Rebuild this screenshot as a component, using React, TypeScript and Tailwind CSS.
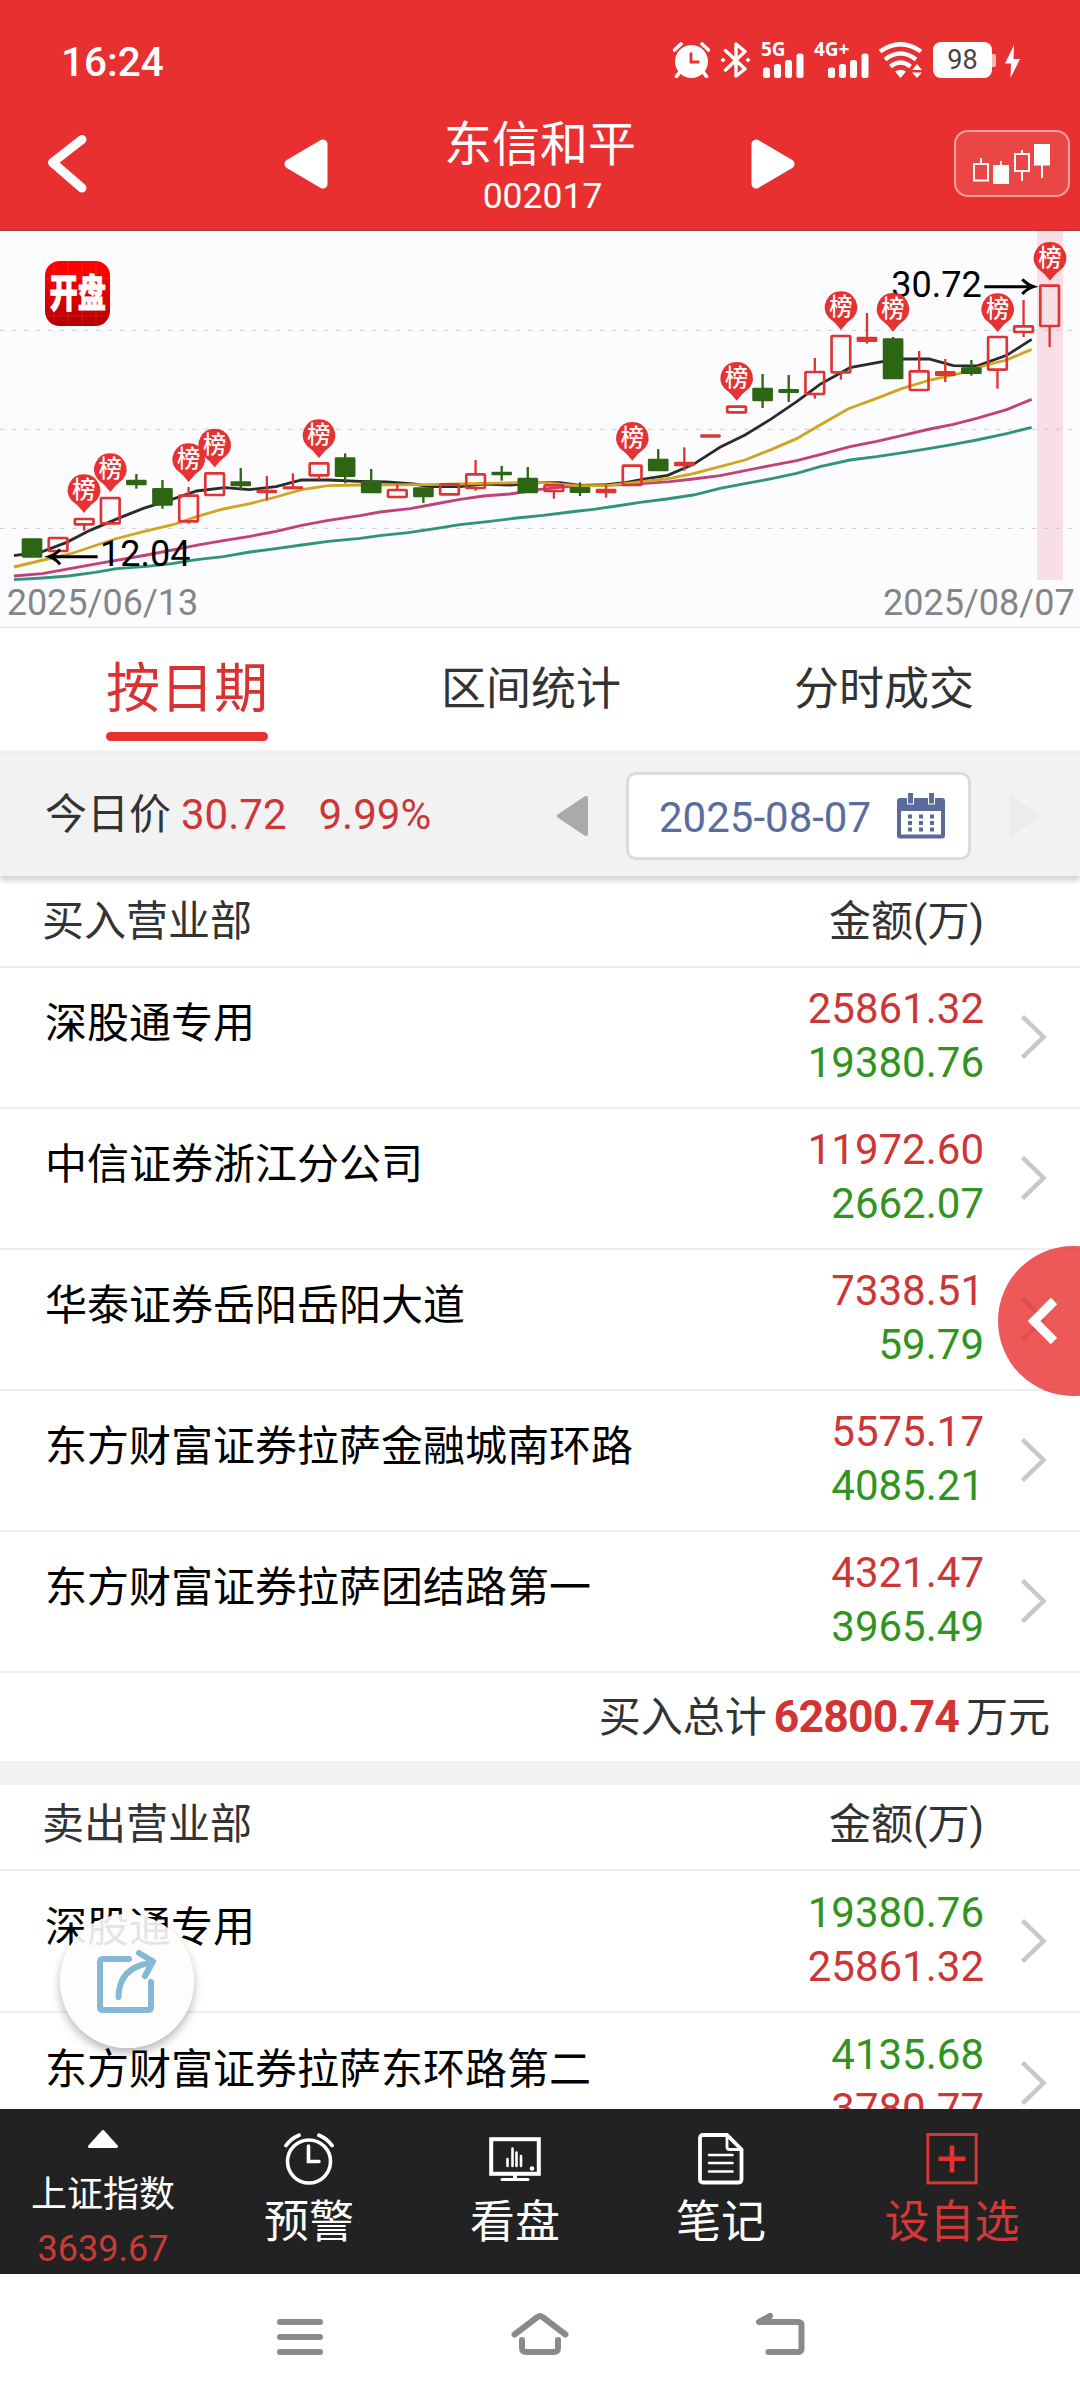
import React from 'react';
import { clsx } from 'clsx';

type Candle = {
  up: boolean;
  top: number;
  bottom: number;
  high?: number;
  low?: number;
  solid?: boolean;
};

type Broker = {
  name: string;
  first: string;
  second: string;
};

// Chart units are thirds of a pixel
const FIRST_X = 96;
const STEP = 78.28;

const candles: Candle[] = [
  { up: false, top: 925, bottom: 983 },
  { up: true, top: 920, bottom: 967 },
  { up: true, top: 863, bottom: 887, low: 902 },
  { up: true, top: 800, bottom: 884 },
  { up: false, top: 749, bottom: 766, high: 732, low: 776 },
  { up: false, top: 774, bottom: 827, high: 750, low: 836 },
  { up: true, top: 793, bottom: 878, high: 771, low: 881 },
  { up: true, top: 726, bottom: 799 },
  { up: false, top: 754, bottom: 769, high: 714, low: 781 },
  { up: true, top: 779, bottom: 790, high: 738, low: 811, solid: true },
  { up: true, top: 769, bottom: 778, high: 730, solid: true },
  { up: true, top: 696, bottom: 740, low: 749 },
  { up: false, top: 682, bottom: 741, high: 670, low: 760 },
  { up: false, top: 752, bottom: 790, high: 717 },
  { up: true, top: 776, bottom: 805, high: 763 },
  { up: false, top: 772, bottom: 802, low: 819 },
  { up: true, top: 759, bottom: 797 },
  { up: true, top: 729, bottom: 778, high: 690, low: 782 },
  { up: false, top: 725, bottom: 736, high: 708, low: 752 },
  { up: false, top: 743, bottom: 790, high: 711 },
  { up: true, top: 762, bottom: 787, low: 806 },
  { up: false, top: 771, bottom: 789, high: 757, low: 798 },
  { up: true, top: 776, bottom: 790, high: 765, low: 803, solid: true },
  { up: true, top: 703, bottom: 769 },
  { up: false, top: 686, bottom: 724, high: 657 },
  { up: true, top: 695, bottom: 709, high: 652, low: 722, solid: true },
  { up: true, top: 613, bottom: 623, solid: true },
  { up: true, top: 526, bottom: 551 },
  { up: false, top: 473, bottom: 514, high: 432, low: 534 },
  { up: false, top: 477, bottom: 489, high: 435, low: 516 },
  { up: true, top: 422, bottom: 496, high: 384, low: 506 },
  { up: true, top: 314, bottom: 431, low: 449 },
  { up: true, top: 320, bottom: 336, high: 249, low: 341, solid: true },
  { up: false, top: 325, bottom: 448, high: 321 },
  { up: true, top: 420, bottom: 484, high: 363 },
  { up: true, top: 423, bottom: 438, high: 387, low: 456, solid: true },
  { up: false, top: 412, bottom: 432, high: 390, low: 437 },
  { up: true, top: 317, bottom: 423, low: 476 },
  { up: true, top: 285, bottom: 310, high: 210, low: 321 },
  { up: true, top: 163, bottom: 292, low: 351 },
];

const averages = [
  {
    color: '#2f9478',
    points:
      '42,1049 127,1044 205,1038 285,1027 350,1016 440,1009 516,1001 590,989 670,980 750,966 828,956 905,945 985,934 1080,925 1145,916 1225,908 1305,896 1380,884 1470,874 1550,864 1630,856 1710,846 1780,838 1850,828 1920,817 2000,807 2080,795 2160,775 2235,761 2315,746 2390,730 2460,710 2550,690 2630,680 2710,668 2790,655 2860,643 2930,630 3020,611 3095,592',
  },
  {
    color: '#c2417a',
    points:
      '42,1038 127,1031 280,1003 440,975 600,944 670,932 750,919 828,904 905,886 985,871 1080,857 1140,846 1230,836 1305,822 1380,808 1450,798 1530,792 1620,778 1710,769 1800,766 1880,764 2010,755 2080,747 2160,737 2235,722 2315,706 2390,692 2460,674 2550,650 2630,634 2705,617 2790,597 2860,583 2930,565 3020,539 3095,508',
  },
  {
    color: '#2b2b2e',
    points:
      '42,977 127,965 200,937 270,901 360,863 430,835 516,808 590,783 675,773 748,779 828,770 905,750 985,750 1080,754 1160,756 1240,762 1290,770 1380,770 1450,762 1530,765 1620,758 1680,758 1740,766 1820,764 1880,757 1940,746 2003,736 2080,703 2160,652 2235,615 2315,566 2390,515 2460,463 2550,413 2647,395 2710,387 2787,387 2860,407 2930,408 3020,376 3095,328',
  },
  {
    color: '#d0a61c',
    points:
      '42,1011 130,990 210,972 345,927 430,905 516,885 590,860 670,837 750,821 828,801 905,779 985,767 1080,765 1280,764 1380,762 1450,760 1620,757 1730,767 1820,767 1880,760 2010,745 2080,731 2160,710 2235,690 2315,658 2390,626 2460,585 2545,536 2620,509 2705,476 2790,450 2880,430 2960,405 3020,390 3095,358',
  },
];

const pins = [
  { x: 252, y: 733 },
  { x: 331, y: 670 },
  { x: 566, y: 640 },
  { x: 644, y: 596 },
  { x: 957, y: 568 },
  { x: 1897, y: 576 },
  { x: 2210, y: 396 },
  { x: 2523, y: 184 },
  { x: 2679, y: 189 },
  { x: 2993, y: 190 },
  { x: 3150, y: 36 },
];

const buyers: Broker[] = [
  { name: '深股通专用', first: '25861.32', second: '19380.76' },
  { name: '中信证券浙江分公司', first: '11972.60', second: '2662.07' },
  { name: '华泰证券岳阳岳阳大道', first: '7338.51', second: '59.79' },
  { name: '东方财富证券拉萨金融城南环路', first: '5575.17', second: '4085.21' },
  { name: '东方财富证券拉萨团结路第一', first: '4321.47', second: '3965.49' },
];

const sellers: Broker[] = [
  { name: '深股通专用', first: '19380.76', second: '25861.32' },
  { name: '东方财富证券拉萨东环路第二', first: '4135.68', second: '3780.77' },
];

function SignalBars() {
  return (
    <svg width="41" height="25" viewBox="0 0 41 25" fill="#fff">
      <rect x="0" y="14.5" width="7" height="10.5" rx="2.5" />
      <rect x="11" y="11" width="7" height="14" rx="2.5" />
      <rect x="22" y="7" width="7" height="18" rx="2.5" />
      <rect x="33.5" y="0.5" width="7" height="24.5" rx="2.5" />
    </svg>
  );
}

function StatusBar() {
  return (
    <div className="flex h-[110px] items-start justify-between pl-[61px] pr-[60px] pt-[42px]">
      <span className="text-[40.5px] font-medium leading-[40px] text-white">16:24</span>
      <div className="flex items-start">
        <svg width="37" height="36" viewBox="0 0 37 36" fill="none" stroke="#fff">
          <circle cx="18.5" cy="19.5" r="16.5" fill="#fff" stroke="none" />
          <path d="M1.5 8 L8 2 M35.5 8 L29 2" strokeWidth="3.6" strokeLinecap="round" />
          <path d="M6 31 L3.5 34.5 M31 31 L33.5 34.5" strokeWidth="3.6" strokeLinecap="round" />
          <path d="M18 10.5 V20 H26.5" stroke="#e83030" strokeWidth="2.8" />
        </svg>
        <svg className="ml-[10px]" width="31" height="36" viewBox="0 0 31 36" fill="none" stroke="#fff" strokeWidth="3.4">
          <path d="M5.5 8.5 L25 27 L16 34 V2 L25 9.5 L5.5 28" strokeLinejoin="round" strokeLinecap="round" />
          <path d="M3 15.5 L5.5 18 L3 20.5 L0.5 18 Z M28 15.5 L30.5 18 L28 20.5 L25.5 18 Z" fill="#fff" stroke="none" />
        </svg>
        <div className="ml-[10px] flex h-9 w-[43px] flex-col justify-between">
          <span className="h-[11px] font-['Open_Sans'] text-[19px] font-bold leading-[15px] text-white">5G</span>
          <div className="ml-[2px]"><SignalBars /></div>
        </div>
        <div className="ml-[10px] flex h-9 w-[55px] flex-col justify-between">
          <span className="h-[11px] font-['Open_Sans'] text-[19px] font-bold leading-[15px] text-white">4G+</span>
          <div className="ml-[14px]"><SignalBars /></div>
        </div>
        <svg className="ml-[9px]" width="46" height="36" viewBox="0 0 46 36" fill="none" stroke="#fff">
          <path d="M2 9.5 Q22.5 -5 43 9.5" strokeWidth="4.4" />
          <path d="M7 17.5 Q22.5 5.5 38 17.5" strokeWidth="4.4" />
          <path d="M12.5 24.5 Q22.5 16.5 32.5 24.5" strokeWidth="4.4" />
          <path d="M17 29.5 Q22.5 26 28 29.5 L22.5 36 Z" fill="#fff" stroke="none" />
          <path d="M34 28 L39 22 L44 28 Z M34 30.5 L39 36 L44 30.5 Z" fill="#fff" stroke="none" />
        </svg>
        <div className="ml-[9px] flex items-center">
          <div className="flex h-9 w-[59px] items-center justify-center rounded-[8px] bg-white text-[27px] leading-none text-[#444]">98</div>
          <div className="h-[13px] w-1 rounded-r-[2px] bg-[#f6b5b5]" />
        </div>
        <svg className="ml-[9px]" width="15" height="37" viewBox="0 0 15 37" fill="#fff">
          <path d="M9 3 L0 21.5 H6 L5.5 36 L15 17 H8.5 Z" />
        </svg>
      </div>
    </div>
  );
}

function TitleBar() {
  return (
    <div className="flex h-[120px] items-start pl-12 pr-[10px]">
      <svg className="mt-[25px]" width="40" height="58" viewBox="0 0 40 58" fill="none">
        <path d="M34 4.5 L4.5 27.5 L34 53" stroke="#fff" strokeWidth="9" strokeLinecap="round" strokeLinejoin="round" />
      </svg>
      <svg className="ml-[196px] mt-[29px]" width="44" height="50" viewBox="0 0 44 50">
        <path d="M39 5 V45 L5 25 Z" fill="#fff" stroke="#fff" strokeWidth="9" strokeLinejoin="round" />
      </svg>
      <div className="ml-[115px] w-[194px] text-center text-white">
        <div className="mt-[7px] whitespace-nowrap text-[48px] leading-[56px]">东信和平</div>
        <div className="mt-[3px] pl-[5px] text-[35.5px] leading-[40px]">002017</div>
      </div>
      <svg className="ml-[114px] mt-[29px]" width="44" height="50" viewBox="0 0 44 50">
        <path d="M5 5 V45 L39 25 Z" fill="#fff" stroke="#fff" strokeWidth="9" strokeLinejoin="round" />
      </svg>
      <div className="ml-auto mt-5 flex h-[67px] w-[116px] items-center justify-center rounded-[14px] border-2 border-[#f4a3a3] bg-[#eb4646]">
        <svg width="78" height="40" viewBox="974 143 78 40" fill="none" stroke="#fff" strokeWidth="2">
          <path d="M975 163 H989 V179.5 H975 Z M982 157 V163" />
          <path d="M995 165 H1009 V182 H995 Z M1002 160 V165" fill="#fff" />
          <path d="M1016 153 H1030 V170 H1016 Z M1023 149 V153 M1023 170 V180" />
          <path d="M1036 144 H1050 V163.5 H1036 Z M1043 163 V177" fill="#fff" />
        </svg>
      </div>
    </div>
  );
}

function CandleMark({ candle, x }: { candle: Candle; x: number }) {
  const color = candle.up ? '#dd3535' : '#2d6612';
  const hollow = candle.up && !candle.solid;
  return (
    <g stroke={color} strokeWidth="7">
      {candle.high !== undefined && <line x1={x} x2={x} y1={candle.high} y2={candle.top + 2} />}
      {candle.low !== undefined && <line x1={x} x2={x} y1={candle.bottom - 2} y2={candle.low} />}
      {hollow ? (
        <rect x={x - 28} y={candle.top + 4} width="56" height={candle.bottom - candle.top - 8} rx="2" fill="none" strokeWidth="8" />
      ) : (
        <rect x={x - 31} y={candle.top} width="62" height={candle.bottom - candle.top} rx="4" fill={color} stroke="none" />
      )}
    </g>
  );
}

function KLineChart() {
  return (
    <svg className="block bg-[#fcfcff]" width="1080" height="398" viewBox="0 0 3240 1194" fontFamily="Roboto, 'Noto Sans CJK SC', sans-serif">
      <defs>
        <linearGradient id="badge" x1="0" y1="0" x2="0" y2="1">
          <stop offset="0.15" stopColor="#ff0000" />
          <stop offset="1" stopColor="#b30000" />
        </linearGradient>
      </defs>
      <rect x="0" y="0" width="3240" height="3" fill="#a83c40" />
      <rect x="3111" y="3" width="78" height="1047" fill="#f7dfe5" />
      {[301, 598, 895].map((y) => (
        <line key={y} x1="0" x2="3240" y1={y} y2={y} stroke="#c6c9cf" strokeWidth="3" strokeDasharray="14 22" />
      ))}

      {averages.map((line) => (
        <polyline key={line.color} points={line.points} fill="none" stroke={line.color} strokeWidth="8.5" />
      ))}
      {candles.map((candle, i) => (
        <CandleMark key={i} candle={candle} x={FIRST_X + STEP * i} />
      ))}

      {/* Lowest and highest price */}
      <g fill="none" stroke="#000" strokeWidth="9">
        <path d="M293 980 H150 M180 958 Q168 973 147 980 Q168 987 180 1003" />
        <path d="M2953 170 H3098 M3067 148 Q3080 163 3101 170 Q3080 177 3067 192" />
      </g>
      <text x="300" y="1008" fontSize="108">12.04</text>
      <text x="2674" y="201" fontSize="108">30.72</text>

      {pins.map((pin) => (
        <g key={pin.x} transform={`translate(${pin.x} ${pin.y})`}>
          <path d="M0 0 A48 48 0 0 1 38 78 Q14 96 0 116 Q-14 96 -38 78 A48 48 0 0 1 0 0 Z" fill="#e63232" />
          <text x="0" y="72" fontSize="70" fontWeight="500" fill="#fff" textAnchor="middle">榜</text>
        </g>
      ))}

      <rect x="135" y="93" width="195" height="195" rx="44" fill="url(#badge)" />
      <path d="M135 145 H330 M135 258 H330 M162 93 V288 M204 93 V288 M246 93 V288 M288 93 V288" stroke="#fff" strokeOpacity="0.1" strokeWidth="3" />
      <text transform="translate(233 231) scale(0.84 1.14)" fontSize="101" fontWeight="900" fill="#fff" stroke="#fff" strokeWidth="2" textAnchor="middle">开盘</text>

      <text x="20" y="1155" fontSize="108" fill="#858585">2025/06/13</text>
      <text x="3224" y="1155" fontSize="108" fill="#858585" textAnchor="end">2025/08/07</text>
      <rect x="0" y="1190" width="3240" height="4" fill="#e6e7eb" />
    </svg>
  );
}

function Tabs() {
  return (
    <div className="flex h-[122px] items-start justify-between bg-white px-[106px] text-[45px] leading-[60px] text-[#333]">
      <div className="flex flex-col text-[54px] text-[#d93232]">
        <span className="mt-[32px]">按日期</span>
        <span className="mt-[12px] h-[9px] rounded-full bg-[#e83030]" />
      </div>
      <span className="mt-[32px]">区间统计</span>
      <span className="mt-[32px]">分时成交</span>
    </div>
  );
}

function DateBar() {
  return (
    <div className="relative flex h-[126px] items-center bg-[#f2f2f2] pl-[45px] text-[42px] leading-[50px] shadow-[0_5px_5px_rgba(0,0,0,0.16)]">
      <div className="absolute left-0 top-[3px] h-px w-full bg-[#e9e9e9]" />
      <div className="flex pt-[3px]">
        <span className="text-[#333]">今日价</span>
        <span className="ml-[10px] text-[#cc3636]">30.72</span>
        <span className="ml-[32px] text-[#cc3636]">9.99%</span>
      </div>
      <svg className="absolute left-[557px] top-[46px]" width="31" height="40" viewBox="0 0 31 40">
        <path d="M29 2 V38 L2 20 Z" fill="#aaa" stroke="#aaa" strokeWidth="4" strokeLinejoin="round" />
      </svg>
      <div className="absolute left-[626px] top-[22px] flex h-[88px] w-[345px] items-center rounded-[10px] border-[3px] border-[#dcdcdc] bg-white pl-[30px] text-[#5b6d9c]">
        <span className="mt-[3px]">2025-08-07</span>
        <svg className="ml-[26px] mt-[-1px]" width="48" height="46" viewBox="0 0 48 46" fill="#5a6b9a">
          <path fillRule="evenodd" d="M3 5 H45 Q48 5 48 8 V42.5 Q48 45.5 45 45.5 H3 Q0 45.5 0 42.5 V8 Q0 5 3 5 Z M4 18 V41.5 H44 V18 Z" />
          <rect x="10.5" y="-1" width="6" height="12" stroke="#fff" strokeWidth="1" />
          <rect x="31.5" y="-1" width="6" height="12" stroke="#fff" strokeWidth="1" />
          <path d="M11 21.5 h4 v4 h-4z M22 21.5 h4 v4 h-4z M33 21.5 h4 v4 h-4z M11 28 h4 v4 h-4z M22 28 h4 v4 h-4z M33 28 h4 v4 h-4z M11 34.5 h4 v4 h-4z M22 34.5 h4 v4 h-4z M33 34.5 h4 v4 h-4z" />
        </svg>
      </div>
      <svg className="absolute right-[40px] top-[46px]" width="31" height="40" viewBox="0 0 31 40">
        <path d="M2 2 V38 L29 20 Z" fill="#ececec" stroke="#ececec" strokeWidth="4" strokeLinejoin="round" />
      </svg>
    </div>
  );
}

function TableHead({ title, className }: { title: string; className: string }) {
  return (
    <div className={clsx('flex items-start justify-between border-b-2 border-[#eee] pl-[42px] pr-[96px] leading-[50px] text-[#333]', className)}>
      <span>{title}</span>
      <span>金额(万)</span>
    </div>
  );
}

function BrokerRow({ broker, sell }: { broker: Broker; sell?: boolean }) {
  return (
    <div className={clsx('flex shrink-0 items-start border-b-2 border-[#eee] pl-[45px] pr-[33px]', sell ? 'h-[142px] pt-px' : 'h-[141px]')}>
      <span className="mt-[31px] leading-[50px] text-black">{broker.name}</span>
      <div className="ml-auto flex flex-col pt-[14px] text-right leading-[54px]">
        <span className={sell ? 'text-[#319320]' : 'text-[#cb3636]'}>{broker.first}</span>
        <span className={sell ? 'text-[#cb3636]' : 'text-[#319320]'}>{broker.second}</span>
      </div>
      <svg className="ml-[37px] mt-[47px]" width="26" height="44" viewBox="0 0 26 44" fill="none">
        <path d="M1.5 1.5 L22.5 22 L1.5 42.5" stroke="#c8c8c8" strokeWidth="4.5" />
      </svg>
    </div>
  );
}

function BottomBar() {
  return (
    <div className="grid h-[165px] grid-cols-[206px_206px_206px_206px_256px] bg-[#222] text-[45px] leading-[54px] text-white">
      <div className="flex flex-col items-center">
        <svg className="mt-[21px]" width="30" height="18" viewBox="0 0 30 18">
          <path d="M15 1.5 L28.5 16.5 H1.5 Z" fill="#fff" stroke="#fff" strokeWidth="3" strokeLinejoin="round" />
        </svg>
        <span className="mt-[27px] text-[36px] leading-[40px]">上证指数</span>
        <span className="mt-[14px] text-[36px] leading-[40px] text-[#c93b38]">3639.67</span>
      </div>
      <div className="flex flex-col items-center pt-6">
        <svg width="50" height="52" viewBox="0 0 50 52" fill="none" stroke="#fff" strokeLinecap="round">
          <circle cx="25" cy="28.5" r="21.5" strokeWidth="3.6" />
          <path d="M24.5 13 V28.5 H35" strokeWidth="3.6" />
          <path d="M2 12.5 Q7 5.5 15 2.2 M48 12.5 Q43 5.5 35 2.2" strokeWidth="3.8" />
        </svg>
        <span className="mt-[11px]">预警</span>
      </div>
      <div className="flex flex-col items-center pt-6">
        <svg width="52" height="52" viewBox="0 0 52 52" fill="none" stroke="#fff">
          <rect x="2.2" y="6.2" width="47.6" height="34.6" strokeWidth="4" />
          <path d="M18.5 26 V33 M23.5 15.5 V33 M27.5 19.5 V33 M32 23 V33" strokeWidth="2.6" strokeLinecap="round" />
          <path d="M26 42 V46" strokeWidth="4" />
          <path d="M13 46.5 H39" strokeWidth="3" strokeLinecap="round" />
          <circle cx="43" cy="35.5" r="2.3" fill="#fff" stroke="none" />
        </svg>
        <span className="mt-[11px]">看盘</span>
      </div>
      <div className="flex flex-col items-center pt-6">
        <svg width="46" height="52" viewBox="0 0 46 52" fill="none" stroke="#fff">
          <path d="M5 2 H29 L43.5 16.5 V46 Q43.5 49.5 40.5 49.5 H5 Q2 49.5 2 46.5 V5 Q2 2 5 2 Z" strokeWidth="3.8" />
          <path d="M29 3 V14 Q29 16.5 31.5 16.5 H43" strokeWidth="2.8" />
          <path d="M11 22 H34.5 M11 30 H34.5 M11 38.5 H34.5" strokeWidth="2.6" strokeLinecap="round" />
        </svg>
        <span className="mt-[11px]">笔记</span>
      </div>
      <div className="flex flex-col items-center pt-6 text-[#d23836]">
        <svg width="52" height="52" viewBox="0 0 52 52" fill="none" stroke="currentColor">
          <rect x="1.8" y="1.5" width="48.4" height="48.4" strokeWidth="3" />
          <path d="M26 12.5 V39.5 M12.5 25.7 H39.5" stroke="#e83030" strokeWidth="4.6" />
        </svg>
        <span className="mt-[11px]">设自选</span>
      </div>
    </div>
  );
}

function SystemNav() {
  return (
    <div className="flex h-[126px] items-start bg-white pl-[277px] pt-[38px]">
      <svg width="46" height="46" viewBox="0 0 46 46" stroke="#8a8a8a" strokeWidth="6" strokeLinecap="round">
        <path d="M3 10 H43 M3 25 H43 M3 40 H43" />
      </svg>
      <svg className="ml-[188px]" width="58" height="46" viewBox="0 0 58 46" fill="none" stroke="#8a8a8a" strokeWidth="6" strokeLinecap="round" strokeLinejoin="round">
        <path d="M3.5 22.5 L26.5 5 Q29 3 31.5 5 L54.5 22.5" />
        <path d="M11 28 V36 Q11 40 15 40 H43 Q47 40 47 36 V28" />
      </svg>
      <svg className="ml-[187px]" width="49" height="46" viewBox="0 0 49 46" fill="none" stroke="#8a8a8a" strokeWidth="6" strokeLinecap="round" strokeLinejoin="round">
        <path d="M14 4 L3 10 H42 Q45.5 10 45.5 13.5 V36.5 Q45.5 40 42 40 H12.5" />
      </svg>
    </div>
  );
}

function App() {
  return (
    <div className="relative flex h-[2400px] w-[1080px] flex-col overflow-hidden bg-white font-[Roboto,'Noto_Sans_CJK_SC',sans-serif]">
      <header className="bg-[#e83030]">
        <StatusBar />
        <TitleBar />
      </header>
      <KLineChart />
      <Tabs />
      <DateBar />

      <main className="flex min-h-0 flex-1 flex-col overflow-hidden whitespace-nowrap text-[42px]">
        <TableHead title="买入营业部" className="h-[92px] shrink-0 pt-[21px]" />
        {buyers.map((broker) => (
          <BrokerRow key={broker.name} broker={broker} />
        ))}
        <div className="flex h-[88px] shrink-0 items-center justify-end pr-[30px] text-[#333]">
          <span>买入总计</span>
          <span className="mx-[7px] text-[44.5px] font-bold tracking-[-0.8px] text-[#d23434]">62800.74</span>
          <span>万元</span>
        </div>
        <div className="h-6 shrink-0 bg-[#f2f2f2]" />
        <TableHead title="卖出营业部" className="h-[86px] shrink-0 pt-[15px]" />
        {sellers.map((broker) => (
          <BrokerRow key={broker.name} broker={broker} sell />
        ))}
      </main>

      <BottomBar />
      <SystemNav />

      {/* Side drawer handle */}
      <div className="absolute left-[998px] top-[1246px] h-[150px] w-[150px] rounded-full bg-[#e83030]/80">
        <svg className="ml-[29px] mt-[51px]" width="32" height="48" viewBox="0 0 32 48" fill="none">
          <path d="M27 4 L7 24 L27 44" stroke="#fff" strokeWidth="9" />
        </svg>
      </div>

      {/* Share button */}
      <div className="absolute left-[60px] top-[1914px] flex h-[134px] w-[134px] items-center justify-center rounded-full bg-[#fdfdfd]/90 shadow-[0_5px_10px_rgba(0,0,0,0.28)]">
        <svg className="mt-[2px]" width="60" height="66" viewBox="0 0 60 66" fill="none" stroke="#84b8d6" strokeWidth="6" strokeLinecap="round" strokeLinejoin="round">
          <path d="M32 10 H6 Q3 10 3 13 V58 Q3 61 6 61 H51 Q54 61 54 58 V33" />
          <path d="M21.5 48 Q22 18 54 14" />
          <path d="M42 4 L56 12.5 L48 27" />
        </svg>
      </div>
    </div>
  );
}

export default App;
